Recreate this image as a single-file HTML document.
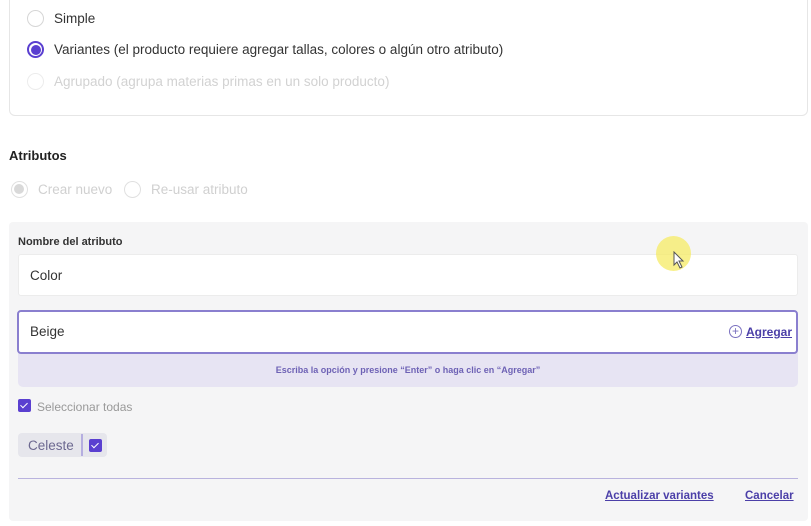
<!DOCTYPE html>
<html><head><meta charset="utf-8"><style>
*{box-sizing:border-box;margin:0;padding:0}
body{width:811px;height:526px;background:#fff;font-family:"Liberation Sans",sans-serif;position:relative;overflow:hidden;color:#333}
.a{position:absolute}
.r{position:absolute;width:17px;height:17px;border-radius:50%;border:1.5px solid #d6d6d6;background:#fff}
.t{position:absolute;font-size:13.5px;white-space:nowrap}
.cb{position:absolute;width:13px;height:13px;background:#5a3fd0;border-radius:2px}
.cb:after{content:"";position:absolute;left:4px;top:2px;width:3px;height:6px;border:solid #fff;border-width:0 1.5px 1.5px 0;transform:rotate(45deg)}
.lk{position:absolute;font-size:11.5px;font-weight:bold;color:#4b3fa8;text-decoration:underline;white-space:nowrap}
</style></head><body>
<div class="a" style="left:9px;top:-10px;width:799px;height:126px;border:1px solid #e6e6e6;border-radius:6px"></div>
<div class="r" style="left:27px;top:10px"></div><div class="t" style="left:54px;top:11px">Simple</div>
<div class="r" style="left:27px;top:41px;border:2px solid #5a3fd0"><div class="a" style="left:1.5px;top:1.5px;width:10px;height:10px;border-radius:50%;background:#5a3fd0"></div></div>
<div class="t" style="left:54px;top:42px">Variantes (el producto requiere agregar tallas, colores o algún otro atributo)</div>
<div class="r" style="left:27px;top:73px;border-color:#ececec"></div><div class="t" style="left:54px;top:74px;color:#d2d2d2">Agrupado (agrupa materias primas en un solo producto)</div>
<div class="t" style="left:9px;top:148px;font-weight:bold;color:#222;font-size:13px">Atributos</div>
<div class="r" style="left:11px;top:181px;border-color:#e0e0e0"><div class="a" style="left:2px;top:2px;width:10px;height:10px;border-radius:50%;background:#d9d9d9"></div></div>
<div class="t" style="left:38px;top:182px;color:#d0d0d0">Crear nuevo</div>
<div class="r" style="left:124px;top:181px;border-color:#e0e0e0"></div>
<div class="t" style="left:151px;top:182px;color:#d0d0d0">Re-usar atributo</div>
<div class="a" style="left:9px;top:222px;width:799px;height:299px;background:#f5f5f6;border-radius:4px"></div>
<div class="t" style="left:18px;top:236px;font-size:11px;font-weight:bold;color:#333">Nombre del atributo</div>
<div class="a" style="left:18px;top:254px;width:780px;height:42px;background:#fff;border:1px solid #ececec;border-radius:3px"></div>
<div class="t" style="left:30px;top:268px">Color</div>
<div class="a" style="left:18px;top:340px;width:780px;height:47px;background:#e7e4f3;border-radius:0 0 5px 5px"></div>
<div class="a" style="left:17px;top:310px;width:781px;height:44px;background:#fff;border:2px solid #8a7fcf;border-radius:4px"></div>
<div class="t" style="left:30px;top:324px">Beige</div>
<div class="a" style="left:729px;top:325px;width:13px;height:13px;border:1px solid #7a70bf;border-radius:50%;color:#7a70bf;font-size:12px;line-height:10px;text-align:center">+</div>
<div class="lk" style="left:746px;top:325px;font-size:12px">Agregar</div>
<div class="t" style="left:18px;top:365px;width:780px;text-align:center;font-size:9px;font-weight:bold;color:#6e62b5">Escriba la opción y presione “Enter” o haga clic en “Agregar”</div>
<div class="cb" style="left:18px;top:399px"></div>
<div class="t" style="left:37px;top:400px;font-size:12px;color:#999">Seleccionar todas</div>
<div class="a" style="left:18px;top:433px;width:89px;height:24px;background:#e6e6ec;border-radius:4px"></div>
<div class="t" style="left:28px;top:438px;color:#6c6890">Celeste</div>
<div class="a" style="left:81px;top:434px;width:2px;height:22px;background:#b5aee0"></div>
<div class="cb" style="left:89px;top:439px"></div>
<div class="a" style="left:18px;top:478px;width:780px;height:1px;background:#b9b3de"></div>
<div class="lk" style="left:605px;top:490px">Actualizar variantes</div>
<div class="lk" style="left:745px;top:490px">Cancelar</div>
<div class="a" style="left:656px;top:236px;width:35px;height:35px;border-radius:50%;background:rgba(245,235,100,.75)"></div>
<svg class="a" style="left:673px;top:251px" width="12" height="18" viewBox="0 0 12 18"><path d="M1 1 L1 14 L4 11 L7 17 L9 16 L6 10 L10 10 Z" fill="#fff" stroke="#555" stroke-width="1"/></svg>
</body></html>
